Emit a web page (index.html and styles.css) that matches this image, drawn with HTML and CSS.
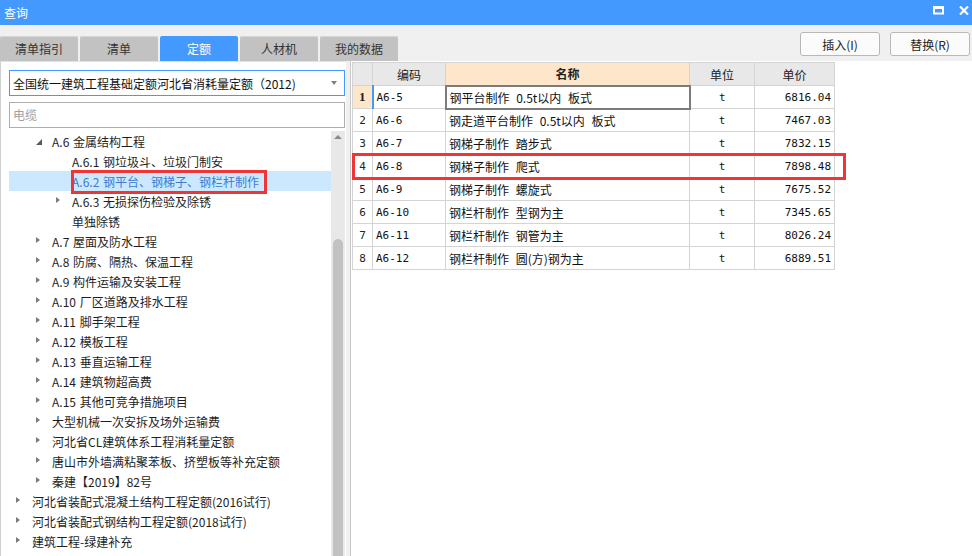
FILE: index.html
```html
<!DOCTYPE html>
<html lang="zh-CN">
<head>
<meta charset="utf-8">
<title>查询</title>
<link rel="stylesheet" href="styles.css">
</head>
<body>
<div class="window">
  <div class="titlebar">
    <span class="title">查询</span>
    <div class="winctl">
      <svg class="ico" width="11" height="9" viewBox="0 0 11 9"><rect x="1" y="1.5" width="9" height="6" fill="none" stroke="#fff" stroke-width="2"/><rect x="0" y="0" width="11" height="3" fill="#fff"/></svg>
      <svg class="ico" width="10" height="9" viewBox="0 0 10 9"><path d="M1 0.5L9 8.5M9 0.5L1 8.5" stroke="#fff" stroke-width="2.2"/></svg>
    </div>
  </div>
  <div class="toolbar">
    <div class="tabs">
      <div class="tab">清单指引</div>
      <div class="tab">清单</div>
      <div class="tab active">定额</div>
      <div class="tab">人材机</div>
      <div class="tab">我的数据</div>
    </div>
    <div class="actions">
      <button class="btn">插入(I)</button>
      <button class="btn">替换(R)</button>
    </div>
  </div>
  <div class="main">
    <div class="left">
      <div class="select">
        <span class="select-text">全国统一建筑工程基础定额河北省消耗量定额（2012)</span>
        <span class="caret"></span>
      </div>
      <div class="search">电缆</div>
      <div class="treewrap">
        <ul class="tree">
          <li class="row l1"><span class="arr open"></span><span>A.6 金属结构工程</span></li>
          <li class="row l2"><span class="arr none"></span><span>A.6.1 钢垃圾斗、垃圾门制安</span></li>
          <li class="row l2 sel"><span class="arr none"></span><span class="hl">A.6.2 钢平台、钢梯子、钢栏杆制作</span></li>
          <li class="row l2"><span class="arr"></span><span>A.6.3 无损探伤检验及除锈</span></li>
          <li class="row l2"><span class="arr none"></span><span>单独除锈</span></li>
          <li class="row l1"><span class="arr"></span><span>A.7 屋面及防水工程</span></li>
          <li class="row l1"><span class="arr"></span><span>A.8 防腐、隔热、保温工程</span></li>
          <li class="row l1"><span class="arr"></span><span>A.9 构件运输及安装工程</span></li>
          <li class="row l1"><span class="arr"></span><span>A.10 厂区道路及排水工程</span></li>
          <li class="row l1"><span class="arr"></span><span>A.11 脚手架工程</span></li>
          <li class="row l1"><span class="arr"></span><span>A.12 模板工程</span></li>
          <li class="row l1"><span class="arr"></span><span>A.13 垂直运输工程</span></li>
          <li class="row l1"><span class="arr"></span><span>A.14 建筑物超高费</span></li>
          <li class="row l1"><span class="arr"></span><span>A.15 其他可竞争措施项目</span></li>
          <li class="row l1"><span class="arr"></span><span>大型机械一次安拆及场外运输费</span></li>
          <li class="row l1"><span class="arr"></span><span>河北省CL建筑体系工程消耗量定额</span></li>
          <li class="row l1"><span class="arr"></span><span>唐山市外墙满粘聚苯板、挤塑板等补充定额</span></li>
          <li class="row l1"><span class="arr"></span><span>秦建【2019】82号</span></li>
          <li class="row l0"><span class="arr"></span><span>河北省装配式混凝土结构工程定额(2016试行)</span></li>
          <li class="row l0"><span class="arr"></span><span>河北省装配式钢结构工程定额(2018试行)</span></li>
          <li class="row l0"><span class="arr"></span><span>建筑工程-绿建补充</span></li>
        </ul>
        <div class="vscroll">
          <div class="up"></div>
          <div class="thumb"></div>
        </div>
      </div>
    </div>
    <div class="right">
      <table class="grid">
        <colgroup>
          <col class="c-no"><col class="c-code"><col class="c-name"><col class="c-unit"><col class="c-price">
        </colgroup>
        <thead>
          <tr><th></th><th>编码</th><th class="h-name">名称</th><th>单位</th><th>单价</th></tr>
        </thead>
        <tbody>
          <tr class="cur"><td class="no">1</td><td class="code">A6-5</td><td class="name">钢平台制作 0.5t以内 板式</td><td class="unit">t</td><td class="price">6816.04</td></tr>
          <tr><td class="no">2</td><td class="code">A6-6</td><td class="name">钢走道平台制作 0.5t以内 板式</td><td class="unit">t</td><td class="price">7467.03</td></tr>
          <tr><td class="no">3</td><td class="code">A6-7</td><td class="name">钢梯子制作 踏步式</td><td class="unit">t</td><td class="price">7832.15</td></tr>
          <tr><td class="no">4</td><td class="code">A6-8</td><td class="name">钢梯子制作 爬式</td><td class="unit">t</td><td class="price">7898.48</td></tr>
          <tr><td class="no">5</td><td class="code">A6-9</td><td class="name">钢梯子制作 螺旋式</td><td class="unit">t</td><td class="price">7675.52</td></tr>
          <tr><td class="no">6</td><td class="code">A6-10</td><td class="name">钢栏杆制作 型钢为主</td><td class="unit">t</td><td class="price">7345.65</td></tr>
          <tr><td class="no">7</td><td class="code">A6-11</td><td class="name">钢栏杆制作 钢管为主</td><td class="unit">t</td><td class="price">8026.24</td></tr>
          <tr><td class="no">8</td><td class="code">A6-12</td><td class="name">钢栏杆制作 圆(方)钢为主</td><td class="unit">t</td><td class="price">6889.51</td></tr>
        </tbody>
      </table>
      <div class="mark"></div>
    </div>
  </div>
</div>
</body>
</html>
```

FILE: styles.css
```css
html, body {
  margin: 0;
  padding: 0;
}
body {
  background: #f0f0f0;
  font-family: "Noto Sans CJK SC", "Microsoft YaHei", sans-serif;
  font-size: 12px;
  color: #1e1e1e;
}
.window {
  width: 972px;
  height: 556px;
  overflow: hidden;
  display: flex;
  flex-direction: column;
}
.titlebar {
  height: 25px;
  flex-shrink: 0;
  background: #4499ff;
  color: #fff;
  display: flex;
  align-items: center;
  justify-content: space-between;
  padding-left: 4px;
}
.title {
  font-size: 12px;
  line-height: 25px;
}
.winctl {
  display: flex;
  align-items: center;
  gap: 15px;
  padding-right: 3px;
  margin-top: -5px;
}
.ico {
  display: block;
}
.toolbar {
  height: 36px;
  flex-shrink: 0;
  display: flex;
  justify-content: space-between;
}
.tabs {
  display: flex;
  align-items: flex-end;
  gap: 2px;
}
.tab {
  width: 78px;
  height: 25px;
  line-height: 25px;
  text-align: center;
  background: #c2c2c2;
  color: #333;
  border-radius: 2px 2px 0 0;
  box-shadow: inset 0 1px 0 #d6d6d6;
}
.tab.active {
  background: #4499ff;
  color: #fff;
  box-shadow: none;
}
.actions {
  display: flex;
  gap: 10px;
  padding: 7px 2px 0 0;
}
.btn {
  width: 80px;
  height: 24px;
  padding: 0;
  background: #fbfbfb;
  border: 1px solid #b8b8b8;
  border-radius: 3px;
  font-family: "Noto Sans CJK SC", sans-serif;
  font-size: 12px;
  color: #222;
}
.main {
  flex: 1;
  min-height: 0;
  display: flex;
}
.left {
  width: 346px;
  box-sizing: border-box;
  background: #fff;
  border-left: 1px solid #cfcfcf;
  border-top: 1px solid #e2e2e2;
  padding: 8px 1px 0 8px;
  display: flex;
  flex-direction: column;
}
.select {
  height: 26px;
  box-sizing: border-box;
  border: 1px solid #4499ff;
  display: flex;
  align-items: center;
  padding: 0 3px;
  color: #111;
  flex-shrink: 0;
}
.caret {
  margin-left: auto;
  margin-right: 4px;
  width: 0;
  height: 0;
  border-left: 3.5px solid transparent;
  border-right: 3.5px solid transparent;
  border-top: 4px solid #808080;
}
.search {
  margin-top: 6px;
  height: 26px;
  box-sizing: border-box;
  border: 1px solid #adadad;
  padding-left: 3px;
  line-height: 24px;
  color: #a0a0a0;
  flex-shrink: 0;
}
.treewrap {
  margin-top: 3px;
  flex: 1;
  min-height: 0;
  display: flex;
}
.tree {
  flex: 1;
  list-style: none;
  margin: 0;
  padding: 0;
}
.row {
  height: 20px;
  display: flex;
  align-items: center;
  white-space: nowrap;
  color: #1e1e1e;
  word-spacing: 1px;
}
.row.l0 { padding-left: 7px; }
.row.l1 { padding-left: 27px; }
.row.l2 { padding-left: 47px; }
.arr {
  width: 16px;
  height: 20px;
  flex-shrink: 0;
  position: relative;
}
.arr::before {
  content: "";
  position: absolute;
  left: 0;
  top: 6px;
  width: 0;
  height: 0;
  border-top: 3.5px solid transparent;
  border-bottom: 3.5px solid transparent;
  border-left: 4px solid #7a7a7a;
}
.arr.none::before {
  display: none;
}
.arr.open::before {
  top: 8px;
  border: none;
  width: 6px;
  height: 6px;
  background: #5a5a5a;
  clip-path: polygon(100% 0, 100% 100%, 0 100%);
}
.row.sel {
  background: #cce8ff;
}
.hl {
  position: relative;
  color: #3a7bd5;
}
.hl::after {
  content: "";
  position: absolute;
  left: -1px;
  right: -8px;
  top: -3px;
  bottom: -4px;
  border: 3px solid #ef3535;
}
.vscroll {
  width: 14px;
  background: #e8e8e8;
  display: flex;
  flex-direction: column;
  align-items: center;
}
.up {
  margin-top: 4px;
  width: 0;
  height: 0;
  border-left: 4px solid transparent;
  border-right: 4px solid transparent;
  border-bottom: 4px solid #8a8a8a;
}
.thumb {
  margin-top: 100px;
  width: 10px;
  flex: 1;
  background: #c2c2c2;
  border-radius: 5px 5px 0 0;
}
.right {
  flex: 1;
  margin-left: 4px;
  background: #fff;
  border-left: 1px solid #c8c8c8;
  position: relative;
}
.grid {
  margin: 1px 0 0 1px;
  border-collapse: collapse;
  table-layout: fixed;
  width: 482px;
}
.c-no { width: 20px; }
.c-code { width: 73px; }
.c-name { width: 244px; }
.c-unit { width: 65px; }
.c-price { width: 80px; }
.grid tr {
  height: 23px;
}
.grid th,
.grid td {
  border: 1px solid #d4d4d4;
  padding: 0 3px;
  white-space: nowrap;
  overflow: hidden;
}
.grid th {
  background: #e8e8e8;
  font-weight: normal;
  font-size: 12px;
  color: #222;
}
.grid th.h-name {
  background: #fde6c9;
  font-weight: bold;
}
.grid td {
  color: #111;
}
.grid td.name {
  word-spacing: 4px;
}
.grid td.no {
  padding: 0;
  text-align: center;
  font-family: "DejaVu Sans Mono", monospace;
  font-size: 11px;
  color: #222;
}
.grid td.code {
  font-family: "DejaVu Sans Mono", monospace;
  font-size: 11px;
}
.grid td.unit {
  text-align: center;
  font-family: "DejaVu Sans Mono", monospace;
  font-size: 11px;
}
.grid td.price {
  text-align: right;
  font-family: "DejaVu Sans Mono", monospace;
  font-size: 11px;
}
.grid tr.cur td.no {
  background: #fde6c9;
  font-family: "Liberation Serif", serif;
  font-weight: bold;
  font-size: 13px;
}
.grid tr.cur td.code {
  border-left: 2px solid #4499ff;
}
.grid tr.cur td.name {
  border: 2px solid #7c7c7c;
}
.mark {
  position: absolute;
  left: 1px;
  top: 92px;
  width: 494px;
  height: 27px;
  box-sizing: border-box;
  border: 3px solid #ef3535;
}
```
